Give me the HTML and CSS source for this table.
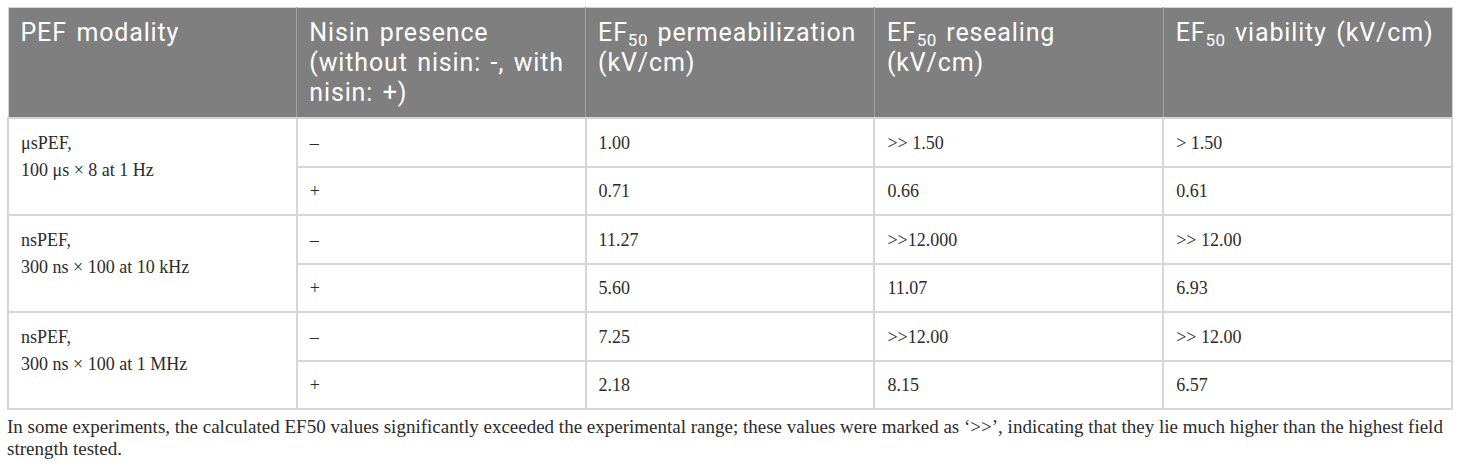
FILE: index.html
```html
<!DOCTYPE html>
<html>
<head>
<meta charset="utf-8">
<link rel="stylesheet" href="styles.css">
</head>
<body>
<div class="wrap">
<table class="data">
  <thead>
    <tr>
      <th>PEF modality</th>
      <th>Nisin presence<br>(without nisin: -, with<br>nisin: +)</th>
      <th>EF<sub>50</sub> permeabilization<br>(kV/cm)</th>
      <th>EF<sub>50</sub> resealing<br>(kV/cm)</th>
      <th>EF<sub>50</sub> viability (kV/cm)</th>
    </tr>
  </thead>
  <tbody>
    <tr>
      <td rowspan="2" class="mod">μsPEF,<br>100 μs × 8 at 1 Hz</td>
      <td>–</td><td>1.00</td><td>&gt;&gt; 1.50</td><td>&gt; 1.50</td>
    </tr>
    <tr>
      <td>+</td><td>0.71</td><td>0.66</td><td>0.61</td>
    </tr>
    <tr>
      <td rowspan="2" class="mod">nsPEF,<br>300 ns × 100 at 10 kHz</td>
      <td>–</td><td>11.27</td><td>&gt;&gt;12.000</td><td>&gt;&gt; 12.00</td>
    </tr>
    <tr>
      <td>+</td><td>5.60</td><td>11.07</td><td>6.93</td>
    </tr>
    <tr>
      <td rowspan="2" class="mod">nsPEF,<br>300 ns × 100 at 1 MHz</td>
      <td>–</td><td>7.25</td><td>&gt;&gt;12.00</td><td>&gt;&gt; 12.00</td>
    </tr>
    <tr>
      <td>+</td><td>2.18</td><td>8.15</td><td>6.57</td>
    </tr>
  </tbody>
</table>
<p class="note">In some experiments, the calculated EF50 values significantly exceeded the experimental range; these values were marked as ‘&gt;&gt;’, indicating that they lie much higher than the highest field strength tested.</p>
</div>
</body>
</html>
```

FILE: styles.css
```css
html, body {
  margin: 0;
  padding: 0;
  background: #ffffff;
}
.wrap {
  padding: 7px 7px 0 7px;
}
.data {
  width: 100%;
  border-collapse: collapse;
  table-layout: fixed;
  border: 1px solid #d4d4d4;
}
.data th {
  background: #7f7f7f;
  color: #ffffff;
  font-family: Roboto, "Noto Sans", sans-serif;
  font-weight: 400;
  font-size: 25px;
  line-height: 30px;
  letter-spacing: 0.85px;
  word-spacing: 2.5px;
  text-align: left;
  vertical-align: top;
  padding: 10px 8px 9px 12px;
  border-left: 1px solid #a3a3a3;
  height: 87px;
}
.data th:first-child {
  border-left: 1px solid #d4d4d4;
}
.data th sub {
  font-size: 17px;
  line-height: 0;
  letter-spacing: 0.5px;
  vertical-align: -5px;
}
.data td {
  font-family: "Liberation Serif", "Times New Roman", serif;
  font-size: 18px;
  line-height: 27px;
  color: #2b2b2b;
  padding: 10.5px 12px 9px 12px;
  border: 2px solid #d6d6d6;
  vertical-align: middle;
}
.data td.mod {
  vertical-align: top;
}
.note {
  margin: 6px 0 0 0;
  font-family: "Liberation Serif", "Times New Roman", serif;
  font-size: 19px;
  line-height: 22px;
  color: #2b2b2b;
}
```
